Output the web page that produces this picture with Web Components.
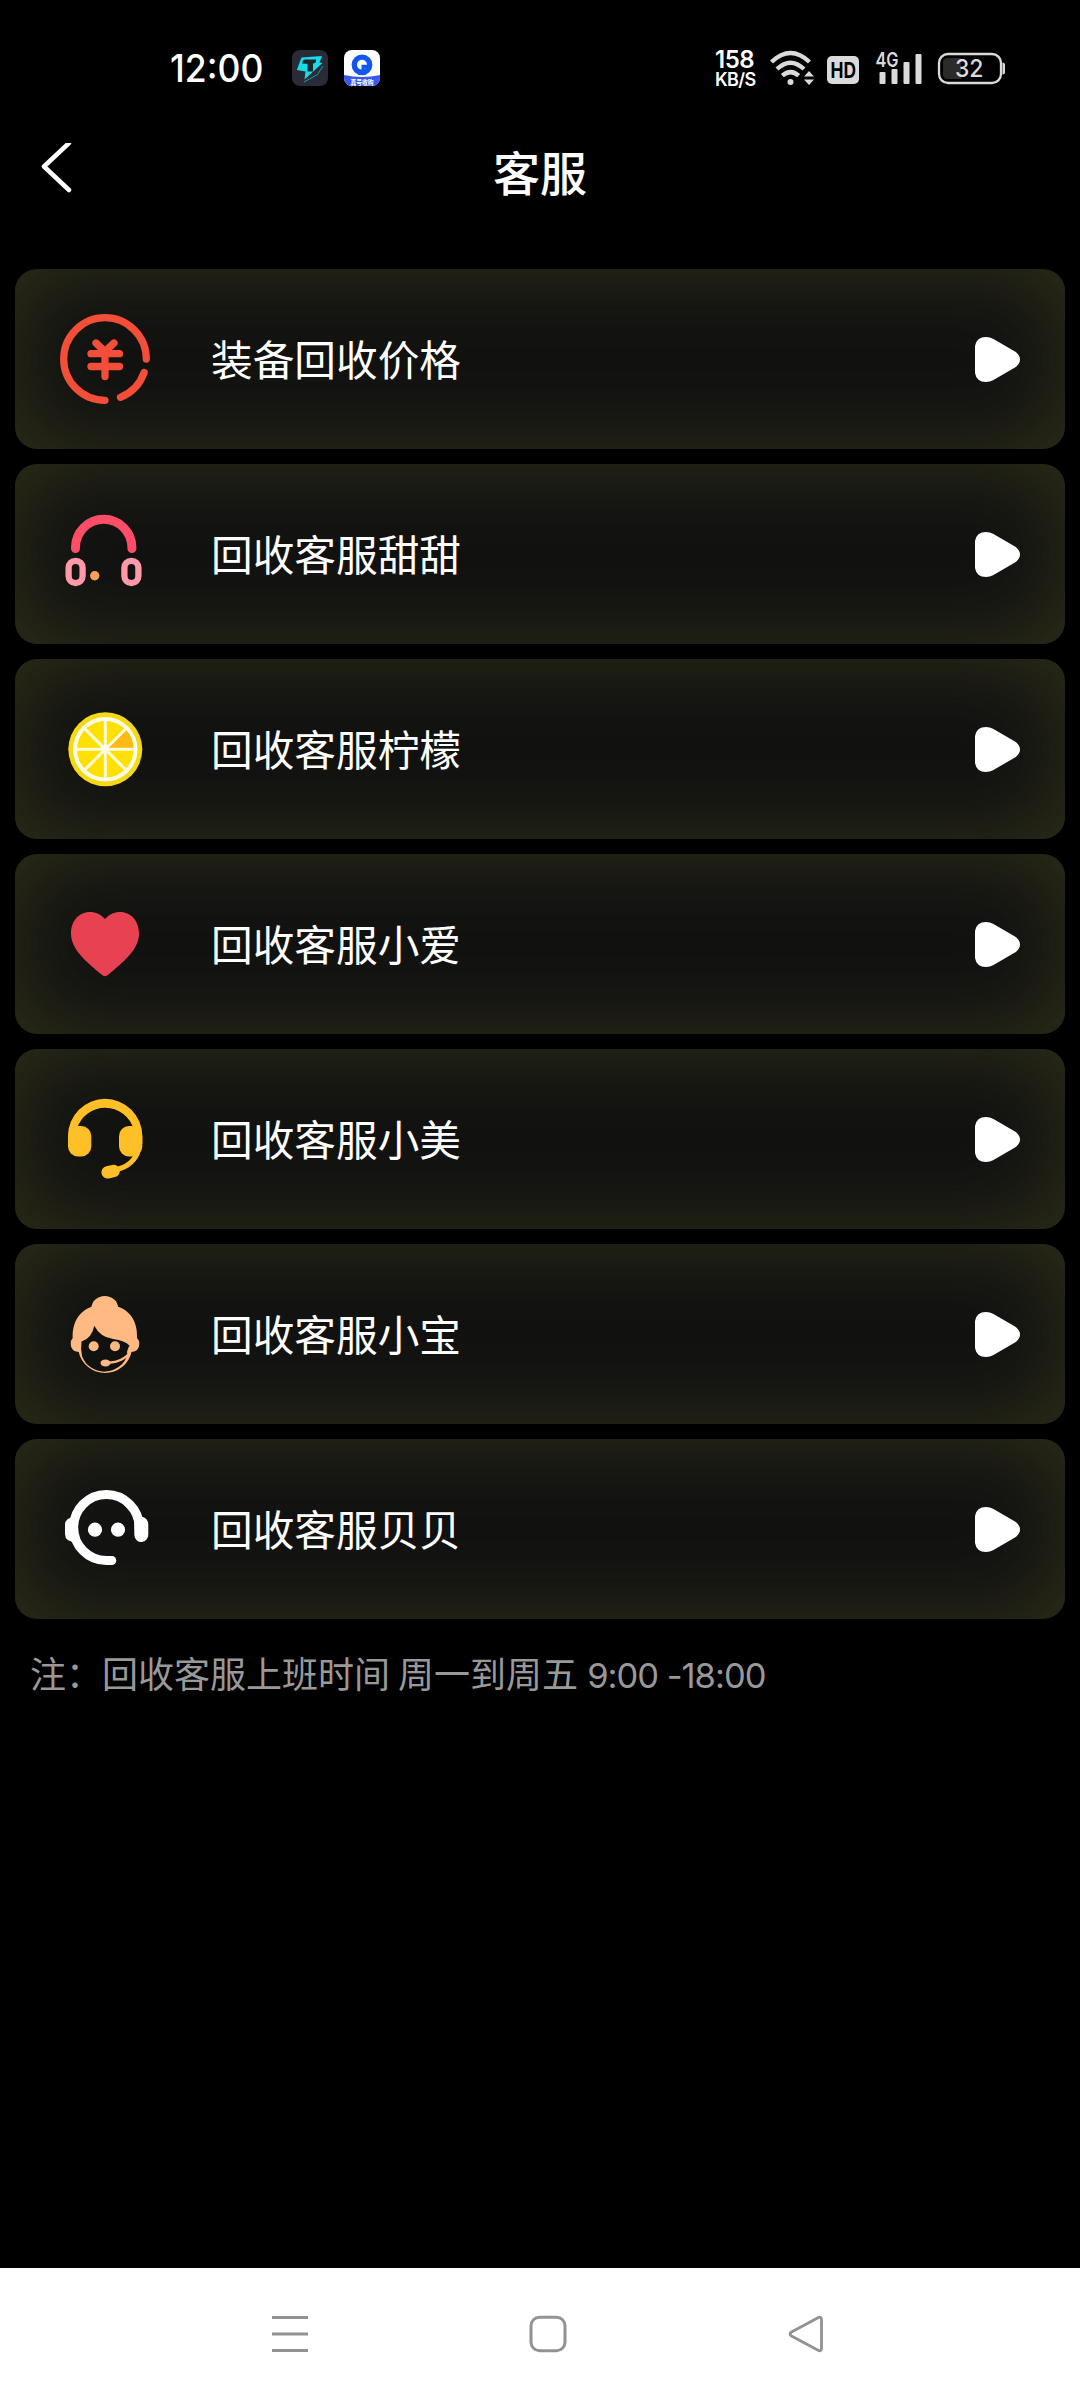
<!DOCTYPE html>
<html lang="zh-CN">
<head>
<meta charset="utf-8">
<title>客服</title>
<style>
html,body{margin:0;background:#000}
body{font-family:Inter,"Noto Sans CJK SC",sans-serif;color:#fff}
</style>
</head>
<body>
<service-page></service-page>
<script>
const define = (name, html) => {
  const t = document.createElement('template');
  t.innerHTML = html;
  customElements.define(name, class extends HTMLElement {
    constructor() {
      super();
      this.attachShadow({mode: 'open'}).append(t.content.cloneNode(true));
    }
  });
};

const icons = {
  yen: `<g fill="none" stroke="#f24e38" stroke-width="7.300" stroke-linecap="round" stroke-linejoin="round"><path d="M86.300 45A41.300 41.300 0 1 0 45 86.300M84.100 58.500A41.300 41.300 0 0 1 60.500 83.300M36 29l9 8.500 9-8.500M31 39.700h28.500M31 52.500h28.500M45 38v24.500"/></g>`,
  headphones: `<path d="M15.500 39.500v-1a28.200 28.200 0 0 1 56.400 0v1" fill="none" stroke="#ff4d67" stroke-width="9" stroke-linecap="round"/><g fill="none" stroke="#ff98a8" stroke-width="6.300"><rect x="8.600" y="51.800" width="14" height="22.300" rx="7"/><rect x="64.400" y="51.800" width="14" height="22.300" rx="7"/></g><circle cx="34.700" cy="66.700" r="4.700" fill="#fa9f5a"/>`,
  lemon: `<circle cx="45.300" cy="45.300" r="37" fill="#f5d914"/><circle cx="45.300" cy="45.300" r="32.300" fill="#fffce6"/><circle cx="45.300" cy="45.300" r="28.300" fill="#ffe000"/><path d="M45.300 45.300h28.300a28.300 28.300 0 0 0-8.300-20z" fill="#fdb915"/><path d="M45.300 15v60.600M15 45.300h60.600M24 24l42.600 42.600M24 66.600L66.600 24" stroke="#fffce0" stroke-width="3"/><circle cx="45.300" cy="45.300" r="4.300" fill="#fffce6"/>`,
  heart: `<path d="M45 20C41 15.500 35.500 13 30 13 18.500 13 11 22.500 11 34.500 11 51 27 63 41.500 75.600Q45 79 48.500 75.600C63 63 79 51 79 34.500 79 22.500 71.500 13 60 13 54.500 13 49 15.500 45 20z" fill="#e84252"/>`,
  headset: `<g fill="#ffbf26"><rect x="8" y="32" width="23.300" height="30.500" rx="10"/><rect x="59" y="32" width="23.300" height="30.500" rx="10"/><path d="M8 50V42a37.150 37.150 0 0 1 74.300 0v8h-6L73.500 35A29.500 29.500 0 0 0 17 34.500L14 50z"/></g><g fill="none" stroke="#ffbf26" stroke-linecap="round"><path d="M78.500 56Q74 71 57 75.500" stroke-width="5"/><path d="M47.600 78.300l6-1.300" stroke-width="12.500"/></g>`,
  lady: `<g fill="#ffba84"><ellipse cx="44.800" cy="19" rx="13.300" ry="12"/><path d="M12.700 49C12 29 24 15.500 45 15.500S78 29 77 49Q79.300 51 79.300 55 79.300 62 71.500 63A27 26.500 0 0 1 18.700 63Q10.700 62 10.700 55 10.700 51 12.700 49z"/></g><path d="M21.500 52.500Q32 49 34.300 36.700 40 48 53 50 65 51.500 69.500 56.500 66 63 67.500 65A23.700 23 0 0 1 22 67Q20.500 60 21.500 52.500z" fill="#11120f"/><path d="M49 73.800Q62 73 70 64" fill="none" stroke="#ffba84" stroke-width="2.500"/><g fill="#ffba84"><circle cx="33.700" cy="57.300" r="5"/><circle cx="55" cy="57.300" r="5"/><ellipse cx="45.500" cy="74" rx="5" ry="3.400"/></g>`,
  robot: `<path d="M79.200 44.500v-1a32.800 33 0 1 0-32.500 33h5" fill="none" stroke="#fff" stroke-width="9.200" stroke-linecap="round"/><g fill="#fff"><path d="M16 33Q5 33 5 41v9q0 8 11 8zM74.300 38L81 32.500Q88.300 33.500 88.300 41v9A7 7.500 0 0 1 74.300 51z"/><circle cx="35" cy="45.700" r="7.100"/><circle cx="58" cy="45.700" r="7.100"/></g>`
};

customElements.define('service-icon', class extends HTMLElement {
  constructor() {
    super();
    this.attachShadow({mode: 'open'});
  }
  connectedCallback() {
    this.shadowRoot.innerHTML = `<style>:host{display:block;width:90px;height:90px}svg{display:block}</style>
      <svg width="90" height="90" viewBox="0 0 90 90">${icons[this.getAttribute('name')]}</svg>`;
  }
});

define('service-row', `<style>
:host{display:flex;align-items:center;box-sizing:border-box;height:180px;padding:0 45px;border-radius:22px;background:#111;box-shadow:inset 0 0 90px #303119}
.label{flex:1;margin:0 0 2px 61px;font:400 41.670px/60px "Noto Sans CJK SC",sans-serif;white-space:nowrap}
svg{display:block}
</style>
<slot name="icon"></slot><span class="label"><slot></slot></span>
<svg width="45" height="45" viewBox="0 0 45 45"><path d="M0 9Q1.500 0 11 0 15 0 18 1.800L40 14.500Q45 18 45 22.500T40 30.500L18 43.200Q15 45 11 45 1.500 45 0 36z" fill="#fff"/></svg>`);

define('status-bar', `<style>
:host{display:flex;align-items:flex-start;box-sizing:border-box;height:110px;padding:50px 75px 0 170px}
svg{display:block;flex:none;overflow:visible}
.apps{display:flex;gap:16px}
.spacer{flex:1}
.speed{display:flex;flex-direction:column;width:54px;font-family:Inter,sans-serif;font-weight:600;white-space:nowrap}
.speed span:first-child{font-size:24px;line-height:20px;letter-spacing:-.5px}
.speed span:last-child{font-size:18px;line-height:20px;letter-spacing:-.6px}
</style>
<svg width="122" height="40" viewBox="170 50 122 40"><text x="170" y="82.300" font-family="Inter" font-size="37.500" font-weight="500" fill="#fff" textLength="93.500" lengthAdjust="spacingAndGlyphs">12:00</text></svg>
<div class="apps">
<svg width="36" height="36" viewBox="0 0 36 36"><rect width="36" height="36" rx="8" fill="#292b36"/><path d="M9.500 7.500L30 6 27.500 12.500 30.500 13 12.500 29.500 13.500 21.500 4.800 20z" fill="#17dce8"/><path d="M10.500 11.500Q11 9.500 13 9.500H24Q24.500 13.500 21 13.500V21.500H15.500V13.700H10.500z" fill="#20242f"/><path d="M31 16L25.500 24.500 12 32" fill="none" stroke="#159eac" stroke-width="1"/></svg>
<svg width="36" height="36" viewBox="0 0 36 36"><defs><clipPath id="c"><rect width="36" height="36" rx="8"/></clipPath></defs><g clip-path="url(#c)"><path d="M0 0h36v36H0z" fill="#fff"/><path d="M0 25Q18 29 36 25v11H0z" fill="#3a57f0"/></g><circle cx="18" cy="14.800" r="7.700" fill="none" stroke="#1257eb" stroke-width="5.400"/><path d="M17.500 14.800h6.500v3.500h-3.300v3.200h-3.200z" fill="#1257eb"/><text x="6.500" y="34.500" font-family="Noto Sans CJK SC" font-size="6.500" font-weight="700" fill="#fff" textLength="23" lengthAdjust="spacingAndGlyphs">真号收购</text></svg>
</div>
<span class="spacer"></span>
<div class="speed"><span>158</span><span>KB/S</span></div>
<svg width="236" height="42" viewBox="769 50 236 42" fill="#dadada" font-family="Inter">
<g fill="none" stroke="#dadada" stroke-width="4.400"><path d="M771.500 62Q790.500 44 809.500 62M777 69Q790.500 56.500 804 69M782.300 75.700Q790.500 68.500 798.700 75.700"/></g><circle cx="790.500" cy="82" r="3"/><path d="M804 76.500l5-5.500 5 5.500zM804 79.500h10l-5 5.500z"/>
<rect x="827" y="56" width="32" height="28" rx="5"/><text x="830.500" y="77.500" font-size="21.500" font-weight="700" fill="#000" textLength="25.500" lengthAdjust="spacingAndGlyphs">HD</text>
<text x="875.500" y="67" font-size="20" font-weight="600" textLength="23" lengthAdjust="spacingAndGlyphs">4G</text>
<rect x="879.500" y="72" width="6" height="12" rx="1"/><rect x="891.500" y="69" width="6" height="15" rx="1"/><rect x="903.500" y="62" width="6" height="22" rx="1"/><rect x="915.500" y="54" width="6" height="30" rx="1"/>
<rect x="939" y="54" width="62" height="29" rx="9" fill="none" stroke="#dadada" stroke-width="2.300"/><path d="M948 58h13v21h-13q-5 0-5-5V63q0-5 5-5z" fill="#2b2b2b"/><path d="M1002.500 62.500q2.500 0 2.500 2.500v7q0 2.500-2.500 2.500z"/>
<text x="955" y="77.300" font-size="24.500" font-weight="500" textLength="28.500" lengthAdjust="spacingAndGlyphs">32</text>
</svg>`);

define('title-bar', `<style>
:host{display:grid;grid-template-columns:40px 1fr 40px;align-items:center;box-sizing:border-box;height:126px;padding:0 40px}
svg{display:block}
h1{margin:0 0 4px 0;text-align:center;font:500 47px/68px "Noto Sans CJK SC",sans-serif}
</style>
<svg width="40" height="60" viewBox="0 0 40 60"><path d="M29 0L4 23.500 29 47" fill="none" stroke="#fff" stroke-width="4.500" stroke-linecap="round" stroke-linejoin="round"/></svg>
<h1><slot></slot></h1>`);

define('nav-bar', `<style>
:host{display:flex;justify-content:space-between;align-items:center;box-sizing:border-box;height:132px;padding:0 255px 0 271px;background:#fff}
svg{display:block}
</style>
<svg width="38" height="38" viewBox="0 0 38 38"><path d="M1 2.500h36M1 19h36M1 35.500h36" stroke="#929292" stroke-width="3"/></svg>
<svg width="38" height="38" viewBox="0 0 38 38"><rect x="2" y="2.300" width="34" height="33.500" rx="8.500" fill="none" stroke="#929292" stroke-width="3"/></svg>
<svg width="38" height="38" viewBox="0 0 38 38"><path d="M31.500 2.500L4.500 17Q1.500 19 4.500 21L31.500 35.500Q34.500 36.500 34.500 33V5Q34.500 1.500 31.500 2.500z" fill="none" stroke="#929292" stroke-width="2.800"/></svg>`);

define('service-note', `<style>
:host{display:block;padding:0 30px;font:400 36px/52px "Noto Sans CJK SC",sans-serif;color:#999;white-space:pre}
</style><slot></slot>`);

define('service-page', `<style>
:host{display:flex;flex-direction:column;width:1080px;height:2400px;background:#000;overflow:hidden}
main{flex:1;display:flex;flex-direction:column;gap:15px;padding:33px 15px 0}
service-note{margin:12px -15px 0}
.hours{margin-left:1px;font-family:Inter,sans-serif;font-size:34.500px;letter-spacing:-1px}
</style>
<status-bar></status-bar>
<title-bar>客服</title-bar>
<main>
<service-row><service-icon slot="icon" name="yen"></service-icon>装备回收价格</service-row>
<service-row><service-icon slot="icon" name="headphones"></service-icon>回收客服甜甜</service-row>
<service-row><service-icon slot="icon" name="lemon"></service-icon>回收客服柠檬</service-row>
<service-row><service-icon slot="icon" name="heart"></service-icon>回收客服小爱</service-row>
<service-row><service-icon slot="icon" name="headset"></service-icon>回收客服小美</service-row>
<service-row><service-icon slot="icon" name="lady"></service-icon>回收客服小宝</service-row>
<service-row><service-icon slot="icon" name="robot"></service-icon>回收客服贝贝</service-row>
<service-note>注：回收客服上班时间 周一到周五 <span class="hours">9:00 -18:00</span></service-note>
</main>
<nav-bar></nav-bar>`);
</script>
</body>
</html>
